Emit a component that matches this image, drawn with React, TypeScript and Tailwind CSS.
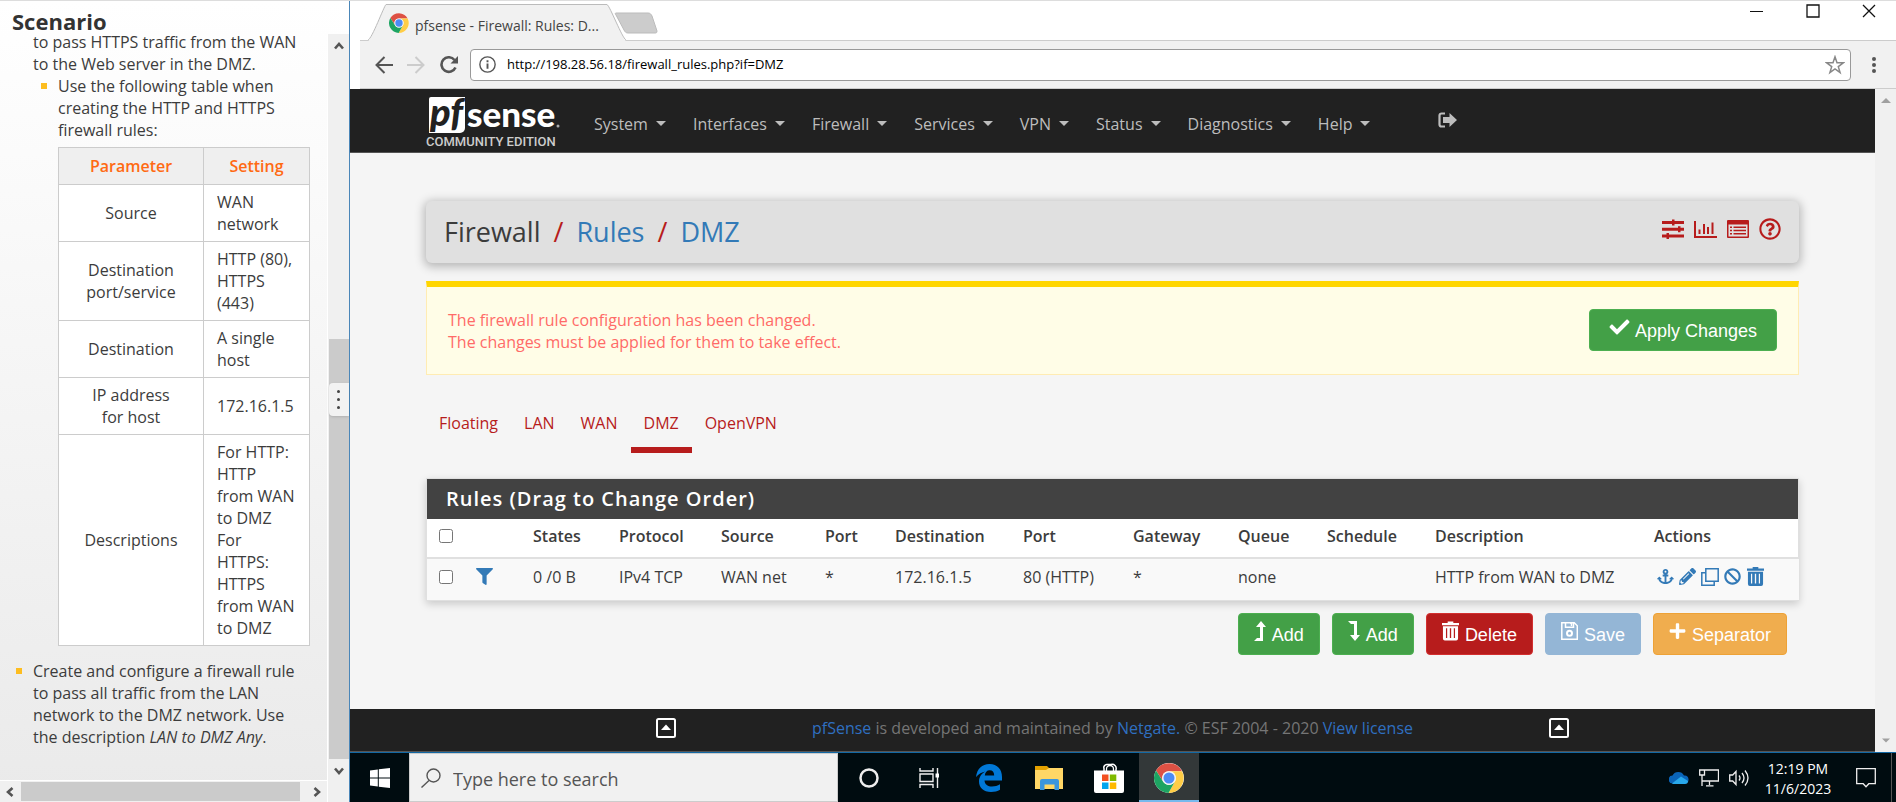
import React from "react";
import { FaAnchor, FaBan, FaCheck, FaFilter, FaPencilAlt, FaPlus, FaRegQuestionCircle } from "react-icons/fa";

const settings: { name: string[]; value: string[] }[] = [
  { name: ["Source"], value: ["WAN", "network"] },
  { name: ["Destination", "port/service"], value: ["HTTP (80),", "HTTPS", "(443)"] },
  { name: ["Destination"], value: ["A single", "host"] },
  { name: ["IP address", "for host"], value: ["172.16.1.5"] },
  {
    name: ["Descriptions"],
    value: ["For HTTP:", "HTTP", "from WAN", "to DMZ", "For", "HTTPS:", "HTTPS", "from WAN", "to DMZ"],
  },
];

const menus = ["System", "Interfaces", "Firewall", "Services", "VPN", "Status", "Diagnostics", "Help"];
const tabs = ["Floating", "LAN", "WAN", "DMZ", "OpenVPN"];

const columns: { label: string; value: string; width: string }[] = [
  { label: "States", value: "0 /0 B", width: "w-[86px]" },
  { label: "Protocol", value: "IPv4 TCP", width: "w-[102px]" },
  { label: "Source", value: "WAN net", width: "w-[104px]" },
  { label: "Port", value: "*", width: "w-[70px]" },
  { label: "Destination", value: "172.16.1.5", width: "w-[128px]" },
  { label: "Port", value: "80 (HTTP)", width: "w-[110px]" },
  { label: "Gateway", value: "*", width: "w-[105px]" },
  { label: "Queue", value: "none", width: "w-[89px]" },
  { label: "Schedule", value: "", width: "w-[108px]" },
  { label: "Description", value: "HTTP from WAN to DMZ", width: "w-[219px]" },
];

function Lines({ items }: { items: string[] }) {
  return (
    <>
      {items.map((line, i) => (
        <span key={i} className="block whitespace-nowrap">
          {line}
        </span>
      ))}
    </>
  );
}

function Chevron({ className }: { className: string }) {
  return (
    <svg viewBox="0 0 10 10" className={`h-[10px] w-[10px] ${className}`} fill="none" stroke="#555" strokeWidth="2.6">
      <path d="M1 7.5 5 3l4 4.5" />
    </svg>
  );
}

function ChromeLogo({ className }: { className: string }) {
  return (
    <svg viewBox="0 0 48 48" className={className}>
      <circle cx="24" cy="24" r="24" fill="#fff" />
      <path d="M24 13h20.8A24 24 0 0 0 3.2 12l11.3 17.5A11 11 0 0 1 24 13Z" fill="#dd5144" />
      <path d="M33.5 29.500 23.200 48A24 24 0 0 0 44.800 13H24a11 11 0 0 1 9.500 16.500Z" fill="#ffcd46" />
      <path d="M14.500 29.500 3.200 12A24 24 0 0 0 23.200 48L33.500 29.500a11 11 0 0 1-19 0Z" fill="#1da462" />
      <circle cx="24" cy="24" r="11" fill="#f1f1f1" />
      <circle cx="24" cy="24" r="8.800" fill="#4c8bf5" />
    </svg>
  );
}

function TrashIcon({ className }: { className: string }) {
  return (
    <svg viewBox="0 0 18 20" className={className} fill="currentColor">
      <path d="M6 0h6v1.500h6V4H0V1.500h6Z" />
      <path
        fillRule="evenodd"
        d="M1 5h16v13a2 2 0 0 1-2 2H3a2 2 0 0 1-2-2ZM4.200 7v10.500h1.300V7Zm4.100 0v10.500h1.400V7Zm4.200 0v10.500h1.300V7Z"
      />
    </svg>
  );
}

function Sidebar() {
  return (
    <aside className="flex w-[350px] shrink-0 border-r border-[#4a86b8] bg-gradient-to-b from-white to-[#eaeaea] text-[#3c3c3c]">
      <div className="flex min-w-0 flex-1 flex-col">
        <h1 className="h-[30px] pl-3 pt-[9px] text-[22px] font-bold leading-[22px] text-[#333]">Scenario</h1>
        <div className="flex-1 pl-[33px] pr-4 text-[16px] leading-[22px]">
          <p>
            to pass HTTPS traffic from the WAN
            <br />
            to the Web server in the DMZ.
          </p>
          <div className="flex">
            <span className="mx-2 mt-2 h-[6px] w-[6px] shrink-0 bg-[#fdbd20]" />
            <p className="pl-[3px]">
              Use the following table when
              <br />
              creating the HTTP and HTTPS
              <br />
              firewall rules:
            </p>
          </div>
          <table className="ml-[25px] mt-[6px] w-[252px] table-fixed border-collapse border border-[#ccc] bg-white">
            <thead>
              <tr className="h-[37px] bg-[#efefef] text-[#ff6a13]">
                <th className="w-[145px] border border-[#ccc] font-semibold">Parameter</th>
                <th className="border border-[#ccc] font-semibold">Setting</th>
              </tr>
            </thead>
            <tbody>
              {settings.map((row, i) => (
                <tr key={i}>
                  <td className="border border-[#ccc] py-[6px] text-center">
                    <Lines items={row.name} />
                  </td>
                  <td className="border border-[#ccc] py-[6px] pl-[13px]">
                    <Lines items={row.value} />
                  </td>
                </tr>
              ))}
            </tbody>
          </table>
          <div className="-ml-[17px] mt-[14px] flex">
            <span className="mr-[11px] mt-2 h-[6px] w-[6px] shrink-0 bg-[#fdbd20]" />
            <p className="whitespace-nowrap">
              Create and configure a firewall rule
              <br />
              to pass all traffic from the LAN
              <br />
              network to the DMZ network. Use
              <br />
              the description <em>LAN to DMZ Any</em>.
            </p>
          </div>
        </div>
        <div className="flex h-[22px] items-center border-t border-white bg-[#f0f0f0] px-[5px]">
          <Chevron className="-rotate-90" />
          <div className="ml-[6px] mr-3 h-[19px] flex-1 bg-[#cbcbcb]" />
          <Chevron className="rotate-90" />
        </div>
      </div>
      <div className="mt-[33px] flex w-[22px] flex-col items-center border-l border-white bg-[#f0f0f0]">
        <Chevron className="mt-[7px]" />
        <div className="mt-[288px] flex w-[20px] flex-1 flex-col bg-[#cbcbcb]">
          <button
            aria-label="Resize panel"
            className="mt-[44px] flex h-[33px] w-full flex-col items-center justify-center gap-[5px] rounded-l bg-[#f2f2f2] shadow"
          >
            <span className="h-[3px] w-[3px] rounded-full bg-[#444]" />
            <span className="h-[3px] w-[3px] rounded-full bg-[#444]" />
            <span className="h-[3px] w-[3px] rounded-full bg-[#444]" />
          </button>
        </div>
        <Chevron className="mb-[26px] mt-[7px] rotate-180" />
      </div>
    </aside>
  );
}

function BrowserChrome() {
  return (
    <header className="bg-white pl-[10px]">
      <div className="flex h-[39px] items-start justify-between">
        <div className="flex h-[39px] items-start">
          <div className="relative ml-2 mt-[3px] h-[37px] w-[258px] shrink-0">
            <svg viewBox="0 0 258 37" className="absolute inset-0 h-full w-full">
              <path d="M0 37C4 36 16 1 18 .5H239C242 1 254 35 258 37Z" fill="#f1f1f1" />
              <path d="M0 36C4 35 16 2 18 .5H239C242 2 254 34 258 36" fill="none" stroke="#bbb" />
            </svg>
            <div className="relative flex h-full items-center gap-[6px] pl-[21px]">
              <ChromeLogo className="h-5 w-5" />
              <span className="mt-[6px] text-[14px] text-[#444]">pfsense - Firewall: Rules: D...</span>
            </div>
          </div>
          <svg viewBox="0 0 44 22" className="-ml-[12px] mt-[11px] h-[22px] w-[44px]">
            <path d="M2 1h32c2 0 3 1 4 3l5 15c0 2-1 2-2 2H14c-2 0-3-1-4-3L2 3c-1-1-1-2 0-2Z" fill="#ccc" stroke="#bbb" />
          </svg>
        </div>
        <div className="flex items-center gap-[42px] pr-5 pt-[3px] text-[#111]">
          <button aria-label="Minimize">
            <svg viewBox="0 0 14 14" className="h-[14px] w-[14px]" stroke="currentColor">
              <path d="M0 7.500h13" />
            </svg>
          </button>
          <button aria-label="Maximize">
            <svg viewBox="0 0 14 14" className="h-[14px] w-[14px]" stroke="currentColor" fill="none">
              <path d="M1 1h12v12H1Z" strokeWidth="1.300" />
            </svg>
          </button>
          <button aria-label="Close">
            <svg viewBox="0 0 14 14" className="h-[14px] w-[14px]" stroke="currentColor" fill="none">
              <path d="m1 1 12 12M13 1 1 13" strokeWidth="1.300" />
            </svg>
          </button>
        </div>
      </div>
      <div className="flex h-[49px] items-center border-b border-t border-[#ccc] bg-[#f1f1f1] pl-[15px]">
        <button aria-label="Back">
          <svg viewBox="0 0 18 18" className="h-[18px] w-[18px]" fill="none" stroke="#555" strokeWidth="2">
            <path d="M18 9H2M9.500 1 1.500 9l8 8" />
          </svg>
        </button>
        <button aria-label="Forward" className="ml-[14px]">
          <svg viewBox="0 0 18 18" className="h-[18px] w-[18px]" fill="none" stroke="#ccc" strokeWidth="2">
            <path d="M0 9h16M8.500 1l8 8-8 8" />
          </svg>
        </button>
        <button aria-label="Reload" className="ml-[15px]">
          <svg viewBox="0 0 18 18" className="h-[18px] w-[18px]">
            <path d="M15.500 11.500A7.300 7.300 0 1 1 14.500 4" fill="none" stroke="#555" strokeWidth="2.600" />
            <path d="M18 0v7.500h-7.500Z" fill="#555" />
          </svg>
        </button>
        <div className="ml-[12px] flex h-[32px] flex-1 items-center rounded border border-[#999] bg-white pl-2 pr-[5px]">
          <svg viewBox="0 0 16 16" className="h-[17px] w-[17px]" fill="none" stroke="#555">
            <circle cx="8" cy="8" r="7.200" strokeWidth="1.300" />
            <path d="M8 7v5M8 4v1.800" strokeWidth="1.800" />
          </svg>
          <input
            aria-label="Address"
            className="ml-[11px] flex-1 bg-transparent text-[13px] text-black outline-none"
            defaultValue="http://198.28.56.18/firewall_rules.php?if=DMZ"
          />
          <button aria-label="Bookmark">
            <svg viewBox="0 0 20 20" className="h-5 w-5" fill="none" stroke="#888" strokeWidth="1.500">
              <path d="m10 1.800 2 5.900 6.300.1-5 3.800 1.800 6-5.100-3.600-5.100 3.600 1.800-6-5-3.800 6.300-.1Z" />
            </svg>
          </button>
        </div>
        <button aria-label="Browser menu" className="ml-[21px] mr-[20px] flex flex-col gap-[2px]">
          <span className="h-[4px] w-[4px] rounded-full bg-[#555]" />
          <span className="h-[4px] w-[4px] rounded-full bg-[#555]" />
          <span className="h-[4px] w-[4px] rounded-full bg-[#555]" />
        </button>
      </div>
    </header>
  );
}

function PfsenseLogo() {
  return (
    <svg viewBox="0 0 134 54" className="h-[54px] w-[134px] overflow-visible" role="img" aria-label="pfsense community edition">
      <path d="M5 2h34v31a5 5 0 0 1-5 5H3V4a2 2 0 0 1 2-2Z" fill="#fff" />
      <text x="4" y="31" fontSize="38" fontWeight="900" fontStyle="italic" fill="#212121" fontFamily="Lato, sans-serif">
        pf
      </text>
      <text x="41" y="32" fontSize="35" fontWeight="900" fill="#fff" fontFamily="Lato, sans-serif">
        sense
      </text>
      <circle cx="132" cy="31" r="1.500" fill="#aaa" />
      <text x="0" y="51" fontSize="13" fontWeight="500" fill="#ccc" fontFamily="Roboto, sans-serif">
        COMMUNITY EDITION
      </text>
    </svg>
  );
}

function NavBar() {
  return (
    <nav className="flex h-[64px] items-start border-b border-[#555] bg-[#212121] px-[76px] pt-[6px] text-[#bdbdbd]">
      <PfsenseLogo />
      <div className="ml-[34px] flex gap-[27px] pt-[17px] text-[16px] leading-[24px]">
        {menus.map((m) => (
          <button key={m} className="flex items-center gap-2">
            {m}
            <svg viewBox="0 0 10 5" className="-mt-[2px] h-[5px] w-[10px]" fill="currentColor">
              <path d="M0 0h10L5 5Z" />
            </svg>
          </button>
        ))}
      </div>
      <a href="#logout" aria-label="Log out" className="ml-[68px] pt-[17px]">
        <svg viewBox="0 0 19 16" className="h-4 w-[19px]">
          <path d="M7 1.500H3.500a2 2 0 0 0-2 2v9a2 2 0 0 0 2 2H7" fill="none" stroke="currentColor" strokeWidth="2.200" />
          <path d="M11.500 1 19 8l-7.500 7v-4H5V5h6.500Z" fill="currentColor" />
        </svg>
      </a>
    </nav>
  );
}

function TitlePanel() {
  return (
    <div className="flex h-[62px] items-center justify-between rounded-md bg-[#e0e0e0] pl-[18px] pr-[18px] shadow-[0_2px_10px_2px_rgba(0,0,0,0.25)]">
      <h2 className="flex gap-[13px] text-[27px] leading-[40px] text-[#3c3c3c]">
        <span>Firewall</span>
        <span className="text-[#b71c1c]">/</span>
        <a href="#rules" className="text-[#337ab7]">Rules</a>
        <span className="text-[#b71c1c]">/</span>
        <a href="#dmz" className="text-[#337ab7]">DMZ</a>
      </h2>
      <div className="flex items-center gap-[10px] pb-[6px] text-[#b71c1c]">
        <a href="#advanced" aria-label="Advanced settings">
          <svg viewBox="0 0 22 20" className="h-5 w-[22px]" fill="currentColor">
            <path d="M0 2h22v3H0ZM0 8.700h22v3H0ZM0 15.500h22v3H0Z" />
            <path d="M10 .5h2.500v6H10ZM16 7.200h2.500v6H16ZM4.500 14H7v6H4.500Z" />
          </svg>
        </a>
        <a href="#status" aria-label="Status">
          <svg viewBox="0 0 23 20" className="h-5 w-[23px]" fill="currentColor">
            <path d="M0 2h2v15h21v2H0ZM4.500 10.500h2V15h-2ZM9 5h2v10H9ZM13 8h2v7h-2ZM17.500 3.500h2V15h-2Z" />
          </svg>
        </a>
        <a href="#log" aria-label="Log">
          <svg viewBox="0 0 22 20" className="h-5 w-[22px]" fill="currentColor">
            <path fillRule="evenodd" d="M1 1h20a1 1 0 0 1 1 1v16a1 1 0 0 1-1 1H1a1 1 0 0 1-1-1V2a1 1 0 0 1 1-1Zm.5 4.500v12h19v-12Z" />
            <path d="M3 7.500h2V9H3ZM6.500 7.500H19V9H6.500ZM3 10.700h2v1.500H3ZM6.500 10.700H19v1.500H6.500ZM3 14h2v1.500H3ZM6.500 14H19v1.500H6.500Z" />
          </svg>
        </a>
        <a href="#help" aria-label="Help">
          <FaRegQuestionCircle className="h-[22px] w-[22px]" />
        </a>
      </div>
    </div>
  );
}

const action = "flex h-[42px] items-center gap-[6px] rounded border px-[15px] pt-[2px] text-[18px] text-white";

function RulesPanel() {
  return (
    <section className="border border-[#e0e0e0] bg-white shadow-[0_3px_8px_rgba(0,0,0,0.18)]">
      <h3 className="h-[40px] bg-[#424242] pl-[19px] text-[20px] font-semibold leading-[40px] tracking-wider text-white">
        Rules (Drag to Change Order)
      </h3>
      <table className="w-full table-fixed border-collapse text-left text-[16px] leading-[22px] text-[#3c3c3c]">
        <thead>
          <tr className="h-[39px] border-b-2 border-[#e0e0e0]">
            <th className="w-[37px] pb-[4px] pl-[12px]">
              <input type="checkbox" aria-label="Select all rules" className="block h-[14px] w-[14px]" />
            </th>
            <th className="w-[57px]" aria-label="Type" />
            {columns.map((c, i) => (
              <th key={i} className={`${c.width} whitespace-nowrap pb-1 pl-[12px] font-semibold`}>
                {c.label}
              </th>
            ))}
            <th className="w-[157px] pb-1 pl-[12px] font-semibold">Actions</th>
          </tr>
        </thead>
        <tbody>
          <tr className="h-[42px] bg-[#f9f9f9]">
            <td className="pb-[6px] pl-[12px]">
              <input type="checkbox" aria-label="Select rule" className="block h-[14px] w-[14px]" />
            </td>
            <td className="pb-[6px] pl-[12px] text-[#337ab7]">
              <FaFilter className="h-[17px] w-[17px]" />
            </td>
            {columns.map((c, i) => (
              <td key={i} className="whitespace-nowrap pb-[6px] pl-[12px]">
                {c.value}
              </td>
            ))}
            <td className="pb-[6px] pl-[15px]">
              <div className="flex items-center gap-[5px] text-[#337ab7]">
                <button aria-label="Toggle anchor"><FaAnchor className="h-[17px] w-[17px]" /></button>
                <button aria-label="Edit"><FaPencilAlt className="h-[17px] w-[17px]" /></button>
                <button aria-label="Copy">
                  <svg viewBox="0 0 18 18" className="h-[18px] w-[18px]" fill="none" stroke="currentColor" strokeWidth="1.500">
                    <path d="M4.800.8h12.400v12.400H4.800Z" />
                    <path d="M4.800 4.800h-4v12.400h12.400v-4" />
                  </svg>
                </button>
                <button aria-label="Disable"><FaBan className="h-[17px] w-[17px]" /></button>
                <button aria-label="Delete rule"><TrashIcon className="ml-[1px] h-[19px] w-[17px]" /></button>
              </div>
            </td>
          </tr>
        </tbody>
      </table>
    </section>
  );
}

function ActionButtons() {
  return (
    <div className="mt-[12px] flex justify-end gap-[12px] pr-[12px]">
      <button className={`${action} border-[#4caf50] bg-[#43a047]`}>
        <svg viewBox="0 0 12 20" className="-mt-[8px] h-5 w-3" fill="currentColor">
          <path d="M7 0l5 6H9v14H0l3-3h3V6H2Z" />
        </svg>
        Add
      </button>
      <button className={`${action} border-[#4caf50] bg-[#43a047]`}>
        <svg viewBox="0 0 12 20" className="-mt-[8px] h-5 w-3" fill="currentColor">
          <path d="M7 20l5-6H9V0H0l3 3h3v11H2Z" />
        </svg>
        Add
      </button>
      <button className={`${action} border-[#d32f2f] bg-[#b71c1c]`}>
        <TrashIcon className="-mt-[8px] h-5 w-[17px]" />
        Delete
      </button>
      <button className={`${action} border-[#94b6d6] bg-[#94b6d6]`}>
        <svg viewBox="0 0 17 18" className="-mt-[8px] h-[18px] w-[17px]" fill="none" stroke="currentColor" strokeWidth="1.500">
          <path d="M.8.8h12.500l3 3v13.400H.8ZM4.500.8v4.400h8V.8" />
          <path d="M9 1h1.500v3" />
          <circle cx="8.500" cy="11.300" r="2.500" strokeWidth="2" />
        </svg>
        Save
      </button>
      <button className={`${action} border-[#eea236] bg-[#f0ad4e]`}>
        <FaPlus className="-mt-[8px] h-[18px] w-[17px]" />
        Separator
      </button>
    </div>
  );
}

function FooterCaret() {
  return (
    <a href="#top" aria-label="Back to top">
      <svg viewBox="0 0 20 20" className="h-5 w-5">
        <rect x="1" y="1" width="18" height="18" rx="1.500" fill="none" stroke="#fff" strokeWidth="2" />
        <path d="M5 12h10l-5-5.500Z" fill="#fff" />
      </svg>
    </a>
  );
}

function Page() {
  return (
    <div className="flex flex-1">
      <div className="flex min-w-0 flex-1 flex-col bg-[#f5f5f5]">
        <NavBar />
        <main className="flex flex-1 flex-col px-[76px] pt-[48px]">
          <TitlePanel />
          <div className="mt-[18px] flex h-[94px] items-center justify-between border border-t-[6px] border-[#ffecb3] border-t-[#ffd600] bg-[#fffde7] px-[21px] pb-[2px]">
            <p className="pt-[2px] text-[16px] leading-[22px] text-[#ff6b68]">
              The firewall rule configuration has been changed.
              <br />
              The changes must be applied for them to take effect.
            </p>
            <button className="flex h-[42px] items-center gap-[5px] rounded border border-[#4caf50] bg-[#43a047] px-[19px] pt-[3px] text-[18px] text-white [font-family:'Liberation_Sans',Arial,sans-serif]">
              <FaCheck className="-mt-[8px] h-[20px] w-[21px]" />
              Apply Changes
            </button>
          </div>
          <div className="mt-[36px] flex">
            {tabs.map((t) => (
              <a
                key={t}
                href={`#${t}`}
                className={`h-[42px] border-b-[6px] px-[13px] text-[16px] leading-[24px] text-[#b71c1c] ${
                  t === "DMZ" ? "border-[#b71c1c]" : "border-transparent"
                }`}
              >
                {t}
              </a>
            ))}
          </div>
          <div className="mt-[25px]">
            <RulesPanel />
          </div>
          <div className="[font-family:'Liberation_Sans',Arial,sans-serif]">
            <ActionButtons />
          </div>
        </main>
        <footer className="flex h-[43px] items-center justify-center gap-[136px] border-b border-[#555] bg-[#212121] pb-1 text-[16px] text-[#757575]">
          <FooterCaret />
          <p>
            <a href="#pfsense" className="text-[#2f6fc0]">pfSense</a> is developed and maintained by{" "}
            <a href="#netgate" className="text-[#2f6fc0]">Netgate.</a> © ESF 2004 - 2020{" "}
            <a href="#license" className="text-[#2f6fc0]">View license</a>
          </p>
          <FooterCaret />
        </footer>
      </div>
      <div className="flex w-[21px] flex-col items-center justify-between bg-[#f0f0f0] py-[9px] text-[#a0a0a0]">
        <svg viewBox="0 0 10 5" className="h-[5px] w-[10px]" fill="currentColor"><path d="M0 5h10L5 0Z" /></svg>
        <svg viewBox="0 0 10 5" className="h-[5px] w-[8px]" fill="currentColor"><path d="M0 0h10L5 5Z" /></svg>
      </div>
    </div>
  );
}

function Taskbar() {
  return (
    <div className="flex h-[50px] shrink-0 items-stretch border-t border-[#1369a5] bg-[#000c10] text-white">
      <button aria-label="Start" className="flex w-[59px] items-center justify-center">
        <svg viewBox="0 0 20 20" className="h-5 w-5" fill="currentColor">
          <path d="M0 2.500 7.800 1.400V9.500H0ZM8.800 1.300 20 0v9.500H8.800ZM0 10.500h7.800v8.100L0 17.500ZM8.800 10.500H20V20L8.800 18.700Z" />
        </svg>
      </button>
      <label className="flex w-[429px] items-center border border-[#ccc] bg-[#f1f1f1] pl-[11px]">
        <svg viewBox="0 0 20 20" className="h-5 w-5" fill="none" stroke="#555" strokeWidth="1.400">
          <circle cx="12.500" cy="7.500" r="6.500" />
          <path d="M8 12.500.5 19.500" />
        </svg>
        <input
          aria-label="Search"
          placeholder="Type here to search"
          className="ml-3 flex-1 bg-transparent pt-[3px] text-[18px] outline-none placeholder:text-[#555] placeholder:opacity-100"
        />
      </label>
      <button aria-label="Cortana" className="flex w-[61px] items-center justify-center">
        <svg viewBox="0 0 20 20" className="h-5 w-5" fill="none" stroke="#eee">
          <circle cx="10" cy="10" r="8.500" strokeWidth="2.500" />
        </svg>
      </button>
      <button aria-label="Task view" className="flex w-[60px] items-center justify-center">
        <svg viewBox="0 0 20 20" className="h-5 w-5" fill="none" stroke="#eee" strokeWidth="1.400">
          <path d="M1 0v3h13V0M1 20v-3.500h13V20M1 6h13v7.500H1ZM18.500 0v20" />
          <path d="M16.500 5.500h3.500v4h-3.500Z" fill="#fff" stroke="none" />
        </svg>
      </button>
      <button aria-label="Edge" className="flex w-[60px] items-center justify-center">
        <svg viewBox="0 0 26 28" className="h-7 w-[26px]" fill="#0078d7">
          <path d="M0 13C1 5 6 0 13.500 0 21.500 0 26 5.500 26 13v3.500H8.500c.3 4 3.500 6 7.500 6 3 0 5.500-.7 8-2.200v5.500C21.500 27.300 18.500 28 15 28 7.500 28 3 23.500 3 17.500c0-4.500 2.500-8 6.500-10C6 8 2.500 10 0 13Zm8.800-1.500h9.400c0-3.300-1.700-5.200-4.600-5.200-2.700 0-4.400 2-4.800 5.200Z" />
        </svg>
      </button>
      <button aria-label="File Explorer" className="flex w-[60px] items-center justify-center">
        <svg viewBox="0 0 28 24" className="h-6 w-7">
          <path d="M0 0h12l2 2v3H0Z" fill="#e2a100" />
          <path d="M0 4h11l3-2h14v21H0Z" fill="#ffd766" />
          <path d="M5 24V15q0-2 2-2h15q2 0 2 2v9h-4.500v-5.500h-10V24Z" fill="#3b96dd" />
        </svg>
      </button>
      <button aria-label="Store" className="flex w-[60px] items-center justify-center">
        <svg viewBox="0 0 30 30" className="h-[30px] w-[30px]">
          <path d="M10 8V5.500a3 3 0 0 1 3-4h4a4 4 0 0 1 5 5V8" fill="none" stroke="#fff" strokeWidth="1.500" />
          <path d="M12.500 8V6a3.500 3.500 0 0 1 7 0v2" fill="none" stroke="#fff" strokeWidth="1.300" />
          <path d="M0 7.500h30V28a2 2 0 0 1-2 2H2a2 2 0 0 1-2-2Z" fill="#fff" />
          <path d="M8 11.500h6.500v6.500H8Z" fill="#f25022" />
          <path d="M15.800 11.500h6.500v6.500h-6.500Z" fill="#7fba00" />
          <path d="M8 19.500h6.500V26H8Z" fill="#00a4ef" />
          <path d="M15.800 19.500h6.500V26h-6.500Z" fill="#ffb900" />
        </svg>
      </button>
      <button aria-label="Chrome" className="flex w-[60px] items-center justify-center border-b-2 border-[#76b9ed] bg-[#333839] pt-[2px]">
        <ChromeLogo className="h-[30px] w-[30px]" />
      </button>
      <div className="ml-auto flex items-center">
        <svg viewBox="0 0 20 13" className="h-[13px] w-5">
          <path d="M4 12.500A4 4 0 0 1 3.500 4.500 6.500 6.500 0 0 1 15 4.500a4 4 0 0 1 1 8Z" fill="#0a64b8" />
          <path d="M3 12.500 12 5.500l7 4.500a3 3 0 0 1-3 3H4Z" fill="#28a8ea" />
        </svg>
        <svg viewBox="0 0 20 18" className="ml-[10px] h-[18px] w-5" fill="none" stroke="#eee" strokeWidth="1.300">
          <path d="M5.500 1h14v11H3M.7 1h4.800v5H.7ZM3 6v11M10.500 12v4M7 16.800h7.500" />
        </svg>
        <svg viewBox="0 0 20 18" className="ml-[10px] h-[18px] w-5" fill="none" stroke="#eee" strokeWidth="1.300">
          <path d="M.7 6h3L7 2.500v13L3.700 12h-3ZM10 6.500q2 2.500 0 5M13 4q4 5 0 10M16 1.500q6 7.500 0 15" />
        </svg>
        <div className="ml-[15px] w-[68px] pt-[2px] text-center text-[14px] leading-[20px]">
          <div>12:19 PM</div>
          <div>11/6/2023</div>
        </div>
        <button aria-label="Notifications" className="ml-[24px]">
          <svg viewBox="0 0 20 20" className="h-5 w-5" fill="none" stroke="#eee" strokeWidth="1.300">
            <path d="M.7.7h18.600v15h-6.500L10 18.800l-2.800-3.100H.7Z" />
          </svg>
        </button>
        <div className="ml-[15px] h-[49px] w-[5px] border-l border-[#555]" />
      </div>
    </div>
  );
}

export default function App() {
  return (
    <div className="flex min-h-screen border-t border-[#ddd] [font-family:'Open_Sans','Noto_Sans',sans-serif]">
      <Sidebar />
      <div className="flex min-w-0 flex-1 flex-col">
        <BrowserChrome />
        <Page />
        <Taskbar />
      </div>
    </div>
  );
}
